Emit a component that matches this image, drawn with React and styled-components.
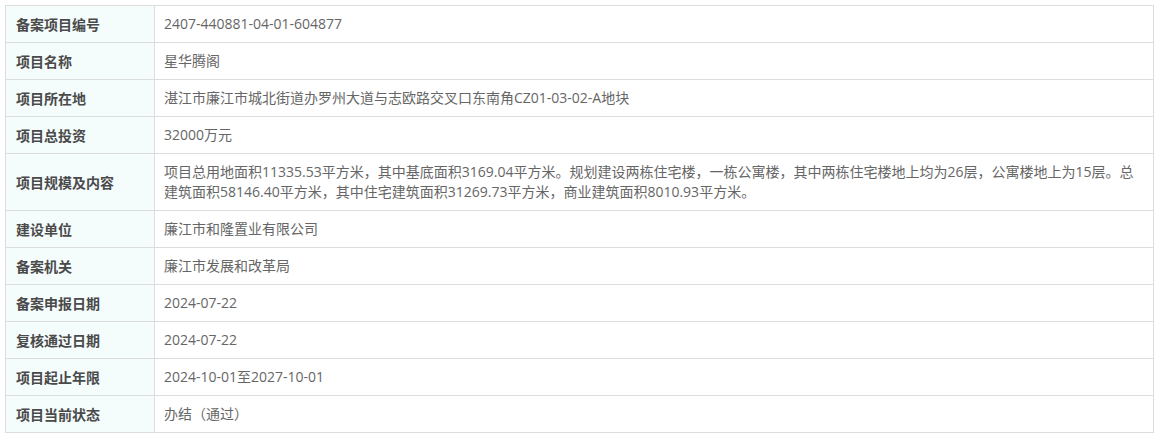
import React from "react";
import styled, { createGlobalStyle } from "styled-components";

const Global = createGlobalStyle`
  html, body { margin: 0; padding: 0; background: #fff; }
  body {
    font-family: "Noto Sans", "Noto Sans CJK SC", sans-serif;
  }
`;

const Wrap = styled.div`
  padding: 5px 5px 0 5px;
`;

const Table = styled.table`
  width: 1149px;
  border-collapse: collapse;
  border: 1px solid #dddddd;
  table-layout: fixed;
`;

const Label = styled.th`
  width: 129px;
  padding: 8px 9px 8px 10px;
  background: #f4fcfc;
  border: 1px solid #dddddd;
  text-align: left;
  font-weight: 700;
  font-size: 14px;
  line-height: 20px;
  color: #4a4a4a;
  font-family: "Noto Sans CJK SC", sans-serif;
`;

const Value = styled.td`
  padding: 8px 9px 8px 9px;
  border: 1px solid #dddddd;
  font-size: 14px;
  line-height: 20px;
  color: #666;
  vertical-align: middle;
  font-family: "Open Sans", "Noto Sans CJK SC", sans-serif;
  word-break: break-all;
`;

const rows = [
  ["备案项目编号", "2407-440881-04-01-604877"],
  ["项目名称", "星华腾阁"],
  ["项目所在地", "湛江市廉江市城北街道办罗州大道与志欧路交叉口东南角CZ01-03-02-A地块"],
  ["项目总投资", "32000万元"],
  [
    "项目规模及内容",
    "项目总用地面积11335.53平方米，其中基底面积3169.04平方米。规划建设两栋住宅楼，一栋公寓楼，其中两栋住宅楼地上均为26层，公寓楼地上为15层。总建筑面积58146.40平方米，其中住宅建筑面积31269.73平方米，商业建筑面积8010.93平方米。",
  ],
  ["建设单位", "廉江市和隆置业有限公司"],
  ["备案机关", "廉江市发展和改革局"],
  ["备案申报日期", "2024-07-22"],
  ["复核通过日期", "2024-07-22"],
  ["项目起止年限", "2024-10-01至2027-10-01"],
  ["项目当前状态", "办结（通过）"],
];

export default function App() {
  return (
    <Wrap>
      <Global />
      <Table>
        <tbody>
          {rows.map(([k, v]) => (
            <tr key={k}>
              <Label>{k}</Label>
              <Value>{v}</Value>
            </tr>
          ))}
        </tbody>
      </Table>
    </Wrap>
  );
}
